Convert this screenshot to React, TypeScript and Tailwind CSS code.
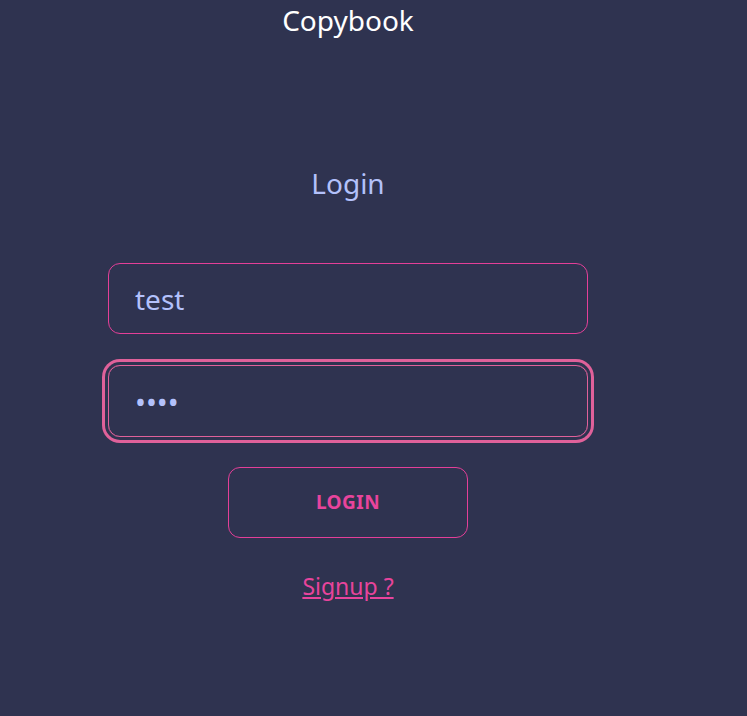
export default function App() {
  return (
    <div
      className="min-h-[716px] w-full bg-[#2f3350]"
      style={{ fontFamily: '"Noto Sans", "Open Sans", sans-serif' }}
    >
      <div className="w-[696px] flex flex-col items-center">
        <h1 className="text-white text-[28px] leading-[40px] mt-0">Copybook</h1>
        <h2 className="text-[#b3c1fb] text-[28px] leading-[40px] mt-[123px]">Login</h2>
        <form className="flex flex-col items-center mt-[60px]">
          <input
            className="w-[480px] h-[71px] rounded-xl border border-[#e43f98] bg-transparent px-[26px] text-[28px] text-[#b3c1fb] outline-none"
            defaultValue="test"
            type="text"
          />
          <input
            className="w-[480px] h-[72px] mt-[31px] rounded-xl border border-[#e0619a] bg-transparent px-[26px] text-[29px] text-[#b3c1fb] outline-none ring-[3px] ring-[#e0619a] ring-offset-[3px] ring-offset-[#2f3350]"
            defaultValue="test"
            type="password"
          />
          <button
            type="submit"
            className="w-[240px] h-[71px] mt-[30px] rounded-xl border border-[#e43f98] text-[#e8449c] font-bold text-[19px] tracking-wide"
          >
            LOGIN
          </button>
          <a href="#" className="mt-[31px] text-[#e8449c] text-[23px] underline">
            Signup ?
          </a>
        </form>
      </div>
    </div>
  )
}
